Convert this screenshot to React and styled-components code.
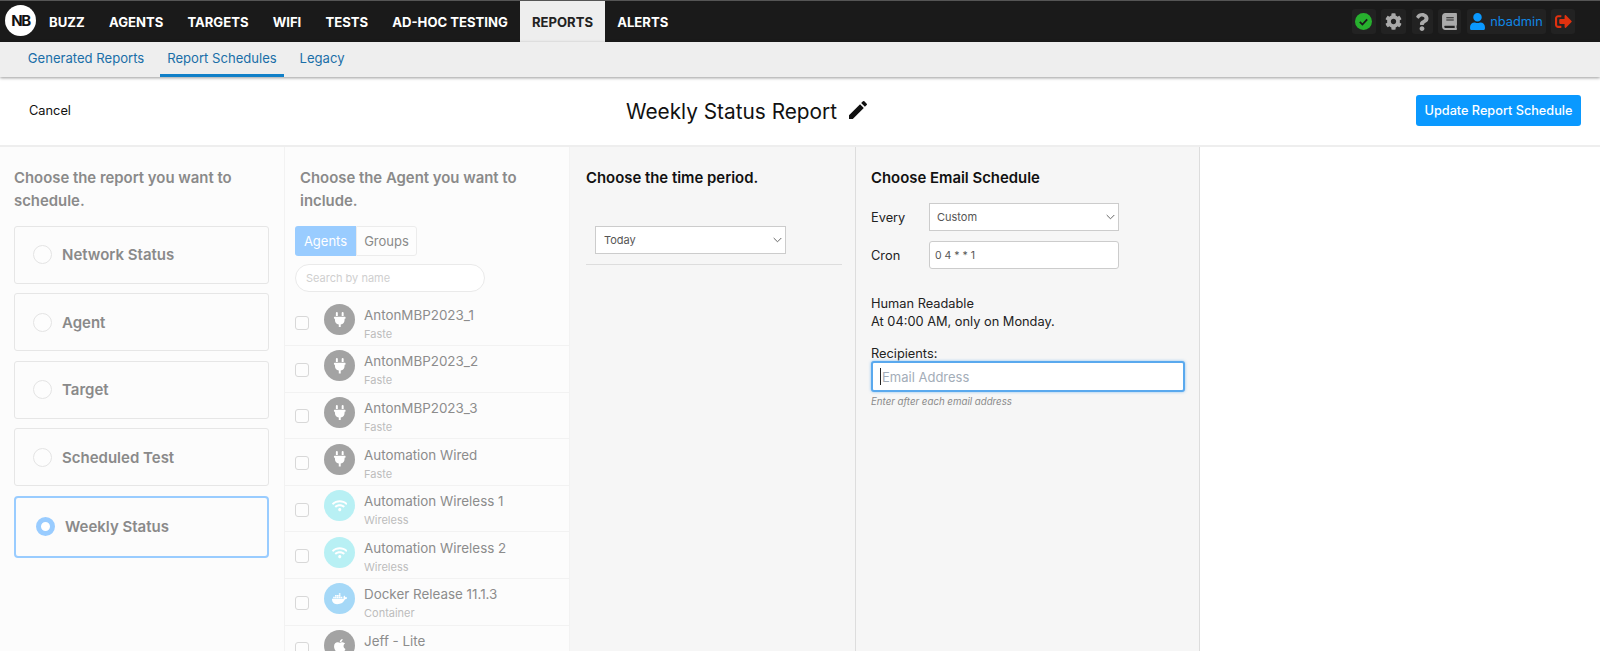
import React from 'react';
import styled, { createGlobalStyle } from 'styled-components';
import {
  FaApple, FaBook, FaCog, FaDocker, FaPlug,
  FaQuestion, FaSignOutAlt, FaUser, FaWifi,
} from 'react-icons/fa';
import { MdEdit } from 'react-icons/md';

const chevron = "url(\"data:image/svg+xml,%3Csvg xmlns='http://www.w3.org/2000/svg' width='9' height='6' viewBox='0 0 9 6'%3E%3Cpath d='M.7 1l3.8 3.8L8.3 1' fill='none' stroke='%23666' stroke-width='1'/%3E%3C/svg%3E\")";

const GlobalStyle = createGlobalStyle`
  html, body, #root { height: 100%; }
  body {
    margin: 0;
    background: #fff;
    font-family: 'Inter', 'Liberation Sans', sans-serif;
    overflow: hidden;
  }
  * { box-sizing: border-box; }
`;

const Page = styled.div`
  height: 651px;
  display: flex;
  flex-direction: column;
  overflow: hidden;
`;

const TopBar = styled.nav`
  height: 42px;
  flex: none;
  display: flex;
  align-items: stretch;
  background: #1a1a1a;
  border-top: 1px solid #555;
  padding-left: 5px;
`;

const Logo = styled.div`
  width: 31px;
  height: 31px;
  margin: 4px 1px 0 0;
  border-radius: 50%;
  background: #fff;
  color: #111;
  font: 700 15px/31px 'Inter', sans-serif;
  letter-spacing: -1.5px;
  text-align: center;
`;

const NavItem = styled.a`
  display: flex;
  align-items: center;
  padding: 0 12.1px;
  font-size: 13.1px;
  font-weight: 700;
  color: ${(p) => (p.$active ? '#222' : '#fff')};
  background: ${(p) => (p.$active ? '#eee' : 'transparent')};
  white-space: nowrap;
`;

const TopRight = styled.div`
  margin-left: auto;
  display: flex;
  align-items: center;
  gap: 5.5px;
  padding-right: 25px;
`;

const Tile = styled.div`
  height: 25px;
  width: ${(p) => p.$w || 24}px;
  display: flex;
  align-items: center;
  justify-content: center;
  gap: 4px;
  border-radius: 3px;
  background: #222;
  color: ${(p) => p.$color || '#aaa'};
  font-size: ${(p) => p.$size || 17}px;
`;

const StatusDot = styled.div`
  width: 17px;
  height: 17px;
  display: flex;
  align-items: center;
  justify-content: center;
  border-radius: 50%;
  background: #27b02e;
`;

const UserName = styled.span`
  font-size: 12.8px;
  color: #1088e6;
`;

const SubNav = styled.div`
  height: 35px;
  flex: none;
  display: flex;
  padding-left: 20px;
  background: #eee;
  box-shadow: 0 1px 3px rgba(0, 0, 0, 0.4);
  position: relative;
`;

const SubLink = styled.a`
  padding-top: 8px;
  margin-right: 8px;
  width: ${(p) => p.$w}px;
  font-size: 13.1px;
  text-align: center;
  white-space: nowrap;
  color: #1a6ea8;
  border-bottom: 3px solid ${(p) => (p.$active ? '#1180c8' : 'transparent')};
`;

const Header = styled.header`
  height: 70px;
  flex: none;
  display: flex;
  align-items: center;
  padding: 0 19px 2px 29px;
  border-bottom: 2px solid #eee;
`;

const Cancel = styled.a`
  width: 597px;
  font-size: 12.8px;
  color: #111;
`;

const Title = styled.h1`
  display: flex;
  align-items: center;
  gap: 9px;
  margin: 2px 0 0;
  font-size: 20.8px;
  font-weight: 400;
  color: #111;
  svg { font-size: 24px; margin-top: -2px; }
`;

const UpdateButton = styled.button`
  margin-left: auto;
  width: 165px;
  height: 31px;
  padding: 0;
  border: none;
  border-radius: 3px;
  background: #0a99ff;
  color: #fff;
  font: 500 12.7px 'Inter', sans-serif;
`;

const Columns = styled.main`
  flex: 1;
  display: grid;
  grid-template-columns: 285px 285px 286px 344px;
  min-height: 0;
`;

const Column = styled.section`
  padding: ${(p) => p.$pad || '20px 14px 0'};
  background: ${(p) => (p.$solid ? '#f6f6f6' : '#fcfcfc')};
  border-right: 1px solid ${(p) => (p.$solid ? '#ddd' : '#f2f2f2')};
  overflow: hidden;
`;

const Heading = styled.h2`
  margin: 0;
  font-size: 14.9px;
  font-weight: 600;
  line-height: 23px;
  color: ${(p) => (p.$dark ? '#111' : '#8a8a8a')};
`;

const Card = styled.div`
  height: ${(p) => (p.$selected ? 62 : 58)}px;
  width: 255px;
  margin-bottom: ${(p) => (p.$selected ? 0 : 9.5)}px;
  padding-left: ${(p) => (p.$selected ? 20 : 18)}px;
  display: flex;
  align-items: center;
  gap: 10px;
  border: ${(p) => (p.$selected ? '2px solid #99ccff' : '1px solid #e6e6e6')};
  border-radius: ${(p) => (p.$selected ? 4 : 3)}px;
  font-size: 15px;
  font-weight: 600;
  color: #8a8a8a;
`;

const CardList = styled.div`
  margin-top: 12.5px;
`;

const Radio = styled.span`
  width: 19px;
  height: 19px;
  flex: none;
  border-radius: 50%;
  background: ${(p) => (p.$on ? '#fff' : '#fdfdfd')};
  border: ${(p) => (p.$on ? '5.5px solid #99ccff' : '1px solid #e4e4e4')};
`;

const AgentHead = styled.div`
  padding: 0 50px 0 15px;
`;

const Filters = styled.div`
  padding-left: 10px;
`;

const Tabs = styled.div`
  display: flex;
  width: 122px;
  height: 30px;
  margin-top: 12.5px;
`;

const Tab = styled.div`
  flex: ${(p) => (p.$on ? '0 0 61px' : 1)};
  display: flex;
  align-items: center;
  justify-content: center;
  font-size: 13px;
  border-radius: ${(p) => (p.$on ? '3px 0 0 3px' : '0 3px 3px 0')};
  background: ${(p) => (p.$on ? '#99ccff' : '#fdfdfd')};
  color: ${(p) => (p.$on ? '#fff' : '#8a8a8a')};
  border: ${(p) => (p.$on ? 'none' : '1px solid #ececec')};
`;

const Search = styled.input`
  display: block;
  width: 190px;
  height: 28px;
  margin: 8px 0 8px;
  padding: 0 10px;
  border: 1px solid #eaeaea;
  border-radius: 14px;
  background: #fff;
  font: 11px 'Inter', sans-serif;
  &::placeholder { color: #cfcfcf; }
`;

const AgentRow = styled.div`
  height: 46.6px;
  display: flex;
  align-items: center;
  padding-left: 10px;
  border-bottom: 1px solid #f2f2f2;
`;

const Check = styled.span`
  width: 14px;
  height: 14px;
  flex: none;
  margin: 2px 15px 0 0;
  border: 1px solid #d8d8d8;
  border-radius: 3px;
  background: #fdfdfd;
`;

const Avatar = styled.span`
  width: 31px;
  height: 31px;
  flex: none;
  margin: -6px 9px 0 0;
  display: flex;
  align-items: center;
  justify-content: center;
  border-radius: 50%;
  color: #fff;
  font-size: 15.5px;
  background: ${(p) => p.$bg};
`;

const AgentText = styled.div`
  height: 34px;
  display: flex;
  flex-direction: column;
  gap: 5px;
  margin-top: 3px;
`;

const AgentName = styled.span`
  font-size: 13.4px;
  line-height: 16px;
  color: #8c8c8c;
`;

const AgentKind = styled.span`
  font-size: 11px;
  line-height: 13px;
  color: #bdbdbd;
`;

const PeriodSelect = styled.select`
  display: block;
  width: 191px;
  height: 28px;
  margin: 36px 0 0 9px;
  padding: 0 8px;
  appearance: none;
  border: 1.5px solid #ccc;
  border-radius: 0;
  background: #fff ${chevron} no-repeat right 3px center;
  color: #555;
  font: 11px 'Inter', sans-serif;
`;

const Rule = styled.hr`
  width: 256px;
  margin: 10px 0 0;
  border: none;
  border-top: 1px solid #ddd;
`;

const FieldRow = styled.div`
  display: flex;
  align-items: center;
  margin-top: ${(p) => p.$top}px;
  font-size: 12.8px;
  color: #222;
`;

const FieldLabel = styled.label`
  width: 58px;
`;

const FieldSelect = styled.select`
  width: 190px;
  height: 28px;
  padding: 0 7px;
  appearance: none;
  border: 1.5px solid #ccc;
  border-radius: 0;
  background: #fff ${chevron} no-repeat right 3px center;
  color: #555;
  font: 11px 'Inter', sans-serif;
`;

const FieldInput = styled.input`
  width: 190px;
  height: 28px;
  padding: 0 5px;
  border: 1px solid #ccc;
  border-radius: 3px;
  background: #fff;
  color: #555;
  font: 10.5px 'Inter', sans-serif;
`;

const Readable = styled.p`
  margin: 26px 0 0;
  font-size: 12.8px;
  line-height: 18px;
  color: #222;
`;

const Recipients = styled.label`
  display: block;
  margin-top: 15px;
  font-size: 12.8px;
  line-height: 15px;
  color: #222;
`;

const EmailWrap = styled.div`
  position: relative;
  width: 314px;
`;

const EmailInput = styled.input`
  display: block;
  width: 100%;
  height: 31px;
  padding: 0 9px;
  border: 2px solid #5aa9ee;
  border-radius: 3px;
  box-shadow: 0 0 3px rgba(90, 169, 238, 0.7);
  background: #fff;
  font: 13px 'Inter', sans-serif;
  &::placeholder { color: #a3adb8; }
`;

const Caret = styled.span`
  position: absolute;
  left: 9px;
  top: 7px;
  width: 1px;
  height: 17px;
  background: #222;
`;

const Hint = styled.div`
  margin-top: 4px;
  font-size: 9.7px;
  font-style: italic;
  color: #8a8a8a;
`;

const navItems = ['BUZZ', 'AGENTS', 'TARGETS', 'WIFI', 'TESTS', 'AD-HOC TESTING', 'REPORTS', 'ALERTS'];
const reports = ['Network Status', 'Agent', 'Target', 'Scheduled Test'];
const gray = '#a3a3a3';
const agents = [
  { name: 'AntonMBP2023_1', kind: 'Faste', icon: <FaPlug />, bg: gray },
  { name: 'AntonMBP2023_2', kind: 'Faste', icon: <FaPlug />, bg: gray },
  { name: 'AntonMBP2023_3', kind: 'Faste', icon: <FaPlug />, bg: gray },
  { name: 'Automation Wired', kind: 'Faste', icon: <FaPlug />, bg: gray },
  { name: 'Automation Wireless 1', kind: 'Wireless', icon: <FaWifi />, bg: '#b8f0f4' },
  { name: 'Automation Wireless 2', kind: 'Wireless', icon: <FaWifi />, bg: '#b8f0f4' },
  { name: 'Docker Release 11.1.3', kind: 'Container', icon: <FaDocker />, bg: '#a5d8f7' },
  { name: 'Jeff - Lite', icon: <FaApple />, bg: gray },
];

export default function App() {
  return (
    <>
      <GlobalStyle />
      <Page>
        <TopBar>
          <Logo>NB</Logo>
          {navItems.map((item) => (
            <NavItem key={item} $active={item === 'REPORTS'}>{item}</NavItem>
          ))}
          <TopRight>
            <Tile>
              <StatusDot>
                <svg width="11" height="11" viewBox="0 0 12 12"><path d="M2 6.5l2.8 2.8L10 3.6" fill="none" stroke="#1a1a1a" strokeWidth="2" /></svg>
              </StatusDot>
            </Tile>
            <Tile $w={25}><FaCog /></Tile>
            <Tile $w={21} $size={18}><FaQuestion /></Tile>
            <Tile $w={23}><FaBook /></Tile>
            <Tile $w={79}><FaUser color="#0a99ff" /><UserName>nbadmin</UserName></Tile>
            <Tile $color="#e0310f"><FaSignOutAlt /></Tile>
          </TopRight>
        </TopBar>
        <SubNav>
          <SubLink $w={132}>Generated Reports</SubLink>
          <SubLink $w={124} $active>Report Schedules</SubLink>
          <SubLink $w={60}>Legacy</SubLink>
        </SubNav>
        <Header>
          <Cancel>Cancel</Cancel>
          <Title>Weekly Status Report <MdEdit /></Title>
          <UpdateButton>Update Report Schedule</UpdateButton>
        </Header>
        <Columns>
          <Column>
            <Heading>Choose the report you want to schedule.</Heading>
            <CardList>
              {reports.map((r) => (
                <Card key={r}><Radio />{r}</Card>
              ))}
              <Card $selected><Radio $on />Weekly Status</Card>
            </CardList>
          </Column>
          <Column $pad="20px 0 0 0">
            <AgentHead>
              <Heading>Choose the Agent you want to include.</Heading>
            </AgentHead>
            <Filters>
              <Tabs><Tab $on>Agents</Tab><Tab>Groups</Tab></Tabs>
              <Search placeholder="Search by name" readOnly />
            </Filters>
            {agents.map((a) => (
              <AgentRow key={a.name}>
                <Check />
                <Avatar $bg={a.bg}>{a.icon}</Avatar>
                <AgentText>
                  <AgentName>{a.name}</AgentName>
                  {a.kind && <AgentKind>{a.kind}</AgentKind>}
                </AgentText>
              </AgentRow>
            ))}
          </Column>
          <Column $solid $pad="20px 16px 0">
            <Heading $dark>Choose the time period.</Heading>
            <PeriodSelect defaultValue="Today"><option>Today</option></PeriodSelect>
            <Rule />
          </Column>
          <Column $solid $pad="20px 15px 0">
            <Heading $dark>Choose Email Schedule</Heading>
            <FieldRow $top={13}>
              <FieldLabel>Every</FieldLabel>
              <FieldSelect defaultValue="Custom"><option>Custom</option></FieldSelect>
            </FieldRow>
            <FieldRow $top={10}>
              <FieldLabel>Cron</FieldLabel>
              <FieldInput defaultValue="0 4 * * 1" readOnly />
            </FieldRow>
            <Readable>Human Readable<br />At 04:00 AM, only on Monday.</Readable>
            <Recipients>Recipients:</Recipients>
            <EmailWrap>
              <EmailInput placeholder="Email Address" readOnly />
              <Caret />
            </EmailWrap>
            <Hint>Enter after each email address</Hint>
          </Column>
        </Columns>
      </Page>
    </>
  );
}
